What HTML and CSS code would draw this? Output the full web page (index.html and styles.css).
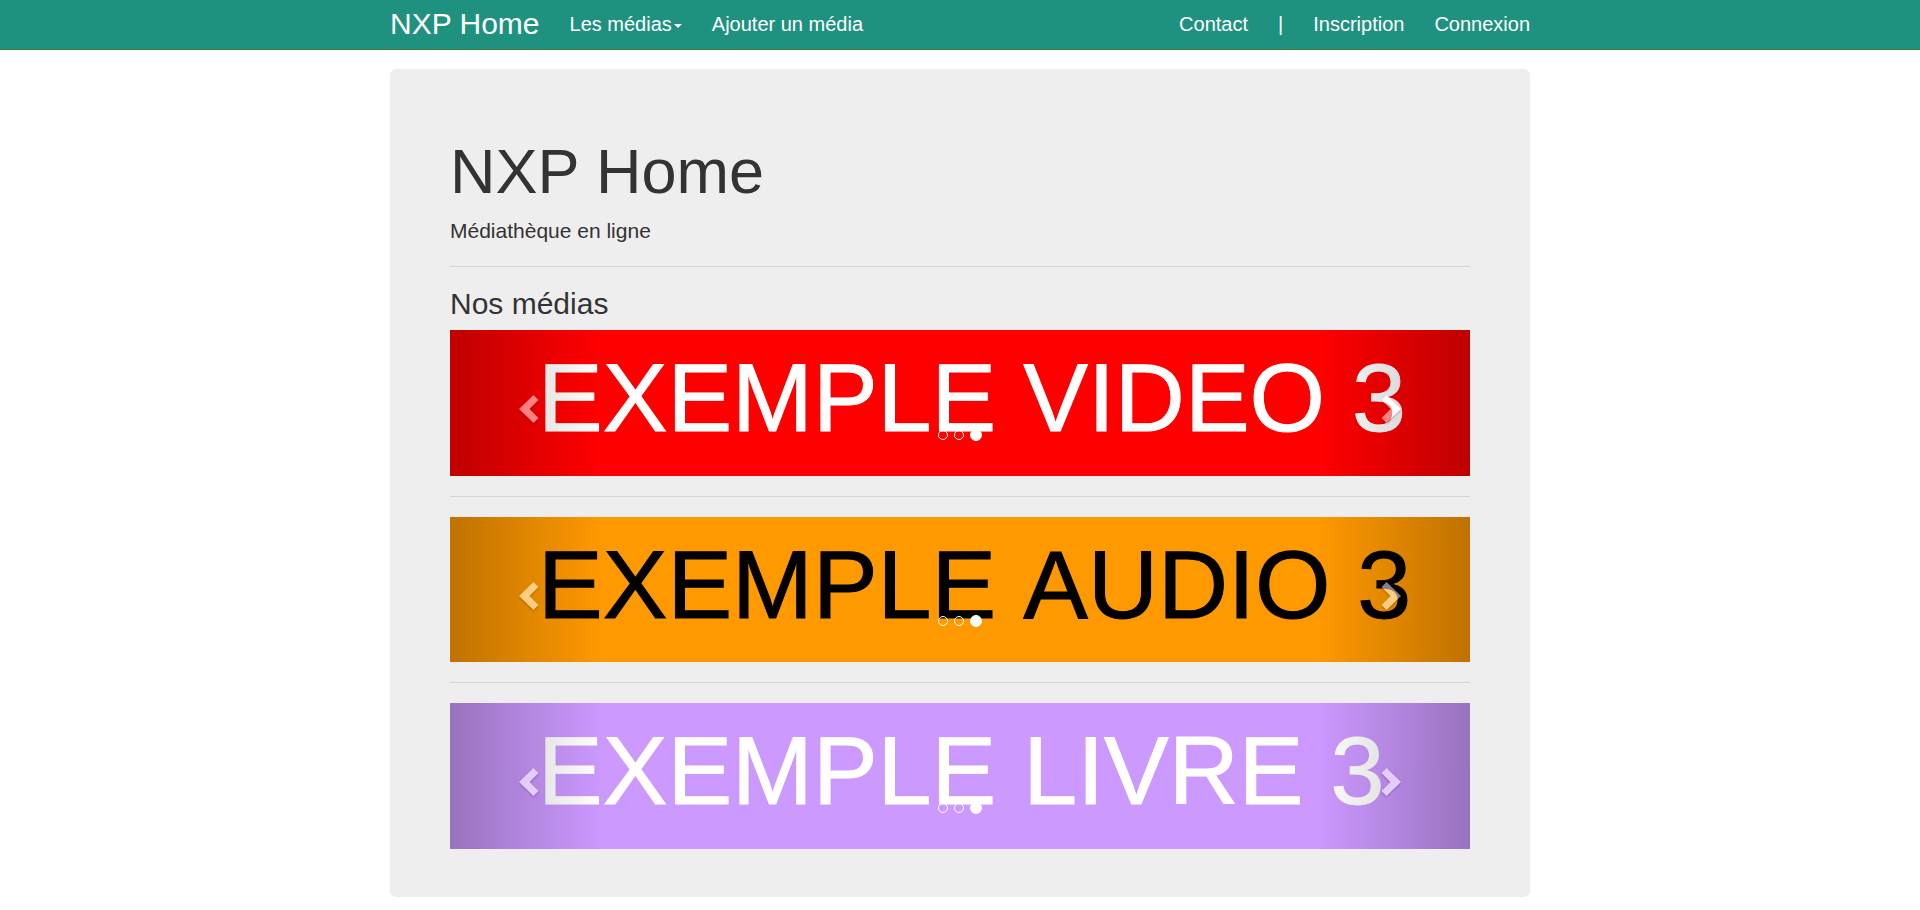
FILE: index.html
```html
<!DOCTYPE html>
<html lang="fr">
<head>
<meta charset="utf-8">
<meta name="viewport" content="width=device-width, initial-scale=1">
<title>NXP Home</title>
<link rel="stylesheet" href="styles.css">
</head>
<body>
<header class="navbar">
  <nav class="container navbar-inner">
    <a class="brand" href="#">NXP Home</a>
    <ul class="nav">
      <li><button class="nav-item" type="button" aria-haspopup="true">Les médias<span class="caret"></span></button></li>
      <li><a class="nav-item" href="#">Ajouter un média</a></li>
    </ul>
    <ul class="nav nav-right">
      <li><a class="nav-item" href="#">Contact</a></li>
      <li><span class="nav-item">|</span></li>
      <li><a class="nav-item" href="#">Inscription</a></li>
      <li><a class="nav-item" href="#">Connexion</a></li>
    </ul>
  </nav>
</header>
<main class="container">
  <div class="jumbotron">
    <h1 class="title">NXP Home</h1>
    <p class="lead">Médiathèque en ligne</p>
    <hr class="rule">
    <h2 class="subtitle">Nos médias</h2>

    <section class="carousel carousel-video" aria-label="Vidéos">
      <div class="slide">EXEMPLE VIDEO 3</div>
      <button class="control control-prev" type="button" aria-label="Précédent"><svg class="chevron" viewBox="0 0 20 28"><path d="M0 14 14.500 0 19.500 5 10.500 14 19.500 23 14.500 28z"/></svg></button>
      <button class="control control-next" type="button" aria-label="Suivant"><svg class="chevron" viewBox="0 0 20 28"><path d="M20 14 5.500 0 .5 5 9.500 14 .5 23 5.500 28z"/></svg></button>
      <div class="indicators">
        <button class="dot" type="button" aria-label="Vidéo 1"></button>
        <button class="dot" type="button" aria-label="Vidéo 2"></button>
        <button class="dot dot-active" type="button" aria-label="Vidéo 3"></button>
      </div>
    </section>
    <hr class="rule">

    <section class="carousel carousel-audio" aria-label="Audio">
      <div class="slide">EXEMPLE AUDIO 3</div>
      <button class="control control-prev" type="button" aria-label="Précédent"><svg class="chevron" viewBox="0 0 20 28"><path d="M0 14 14.500 0 19.500 5 10.500 14 19.500 23 14.500 28z"/></svg></button>
      <button class="control control-next" type="button" aria-label="Suivant"><svg class="chevron" viewBox="0 0 20 28"><path d="M20 14 5.500 0 .5 5 9.500 14 .5 23 5.500 28z"/></svg></button>
      <div class="indicators">
        <button class="dot" type="button" aria-label="Audio 1"></button>
        <button class="dot" type="button" aria-label="Audio 2"></button>
        <button class="dot dot-active" type="button" aria-label="Audio 3"></button>
      </div>
    </section>
    <hr class="rule">

    <section class="carousel carousel-livre" aria-label="Livres">
      <div class="slide">EXEMPLE LIVRE 3</div>
      <button class="control control-prev" type="button" aria-label="Précédent"><svg class="chevron" viewBox="0 0 20 28"><path d="M0 14 14.500 0 19.500 5 10.500 14 19.500 23 14.500 28z"/></svg></button>
      <button class="control control-next" type="button" aria-label="Suivant"><svg class="chevron" viewBox="0 0 20 28"><path d="M20 14 5.500 0 .5 5 9.500 14 .5 23 5.500 28z"/></svg></button>
      <div class="indicators">
        <button class="dot" type="button" aria-label="Livre 1"></button>
        <button class="dot" type="button" aria-label="Livre 2"></button>
        <button class="dot dot-active" type="button" aria-label="Livre 3"></button>
      </div>
    </section>
  </div>
</main>
</body>
</html>
```
FILE: styles.css
```css
*,
*::before,
*::after {
  box-sizing: border-box;
}

body {
  margin: 0;
  background: #fff;
  color: #333;
  font-family: "Liberation Sans", Arial, Helvetica, sans-serif;
  font-size: 20px;
}

button {
  margin: 0;
  padding: 0;
  border: 0;
  background: none;
  color: inherit;
  font: inherit;
  cursor: pointer;
}

.container {
  max-width: 1140px;
  margin: 0 auto;
}

/* Navigation */
.navbar {
  min-height: 50px;
  margin-bottom: 19px;
  border-bottom: 1px solid #3f7f2f;
  background: #1f917f;
  color: #fff;
}

.navbar-inner {
  display: flex;
  flex-wrap: wrap;
  line-height: 48px;
}

.brand {
  margin-right: 15px;
  color: #fff;
  font-size: 30px;
  text-decoration: none;
}

.nav {
  display: flex;
  margin: 0;
  padding: 0;
  list-style: none;
}

.nav-right {
  margin-left: auto;
  margin-right: -15px;
}

.nav-item {
  display: block;
  padding: 0 15px;
  color: #fff;
  line-height: 48px;
  text-decoration: none;
}

.caret {
  display: inline-block;
  margin-left: 2px;
  border-top: 4px solid;
  border-right: 4px solid transparent;
  border-left: 4px solid transparent;
  vertical-align: middle;
}

/* Main panel */
.jumbotron {
  padding: 48px 60px;
  border-radius: 6px;
  background: #eee;
}

.title,
.subtitle {
  margin: 20px 0 10px;
  font-weight: 400;
}

.title {
  font-size: 63px;
  line-height: 69px;
}

.subtitle {
  font-size: 30px;
  line-height: 33px;
}

.lead {
  margin: 0 0 15px;
  font-size: 21px;
  line-height: 30px;
}

.rule {
  margin: 20px 0;
  border: 0;
  border-top: 1px solid #d5d5d5;
}

/* Carousels */
.carousel {
  position: relative;
  aspect-ratio: 7 / 1;
  overflow: hidden;
}

.carousel-video {
  background: #f00;
  color: #fff;
}

.carousel-audio {
  background: #f90;
  color: #000;
}

.carousel-livre {
  background: #c9f;
  color: #fff;
}

.slide {
  padding-left: 88px;
  font-size: 97px;
  font-kerning: none;
  line-height: 136px;
  white-space: nowrap;
  -webkit-text-stroke: 1px currentColor;
}

.control {
  position: absolute;
  top: 0;
  bottom: 0;
  display: flex;
  align-items: center;
  justify-content: center;
  width: 15%;
  padding-top: 12px;
  opacity: .5;
}

.control-prev {
  left: 0;
  padding-left: 5px;
  background: linear-gradient(to right, rgba(0, 0, 0, .5), rgba(0, 0, 0, 0));
}

.control-next {
  right: 0;
  padding-right: 6px;
  background: linear-gradient(to right, rgba(0, 0, 0, 0), rgba(0, 0, 0, .5));
}

.chevron {
  width: 20px;
  height: 28px;
  fill: #fff;
  filter: drop-shadow(0 1px 1px rgba(0, 0, 0, .6));
}

.indicators {
  position: absolute;
  right: 0;
  bottom: 35px;
  left: 0;
  display: flex;
  align-items: center;
  justify-content: center;
  gap: 6px;
}

.dot {
  width: 10px;
  height: 10px;
  border: 1px solid #fff;
  border-radius: 50%;
}

.dot-active {
  width: 12px;
  height: 12px;
  background: #fff;
}
```
